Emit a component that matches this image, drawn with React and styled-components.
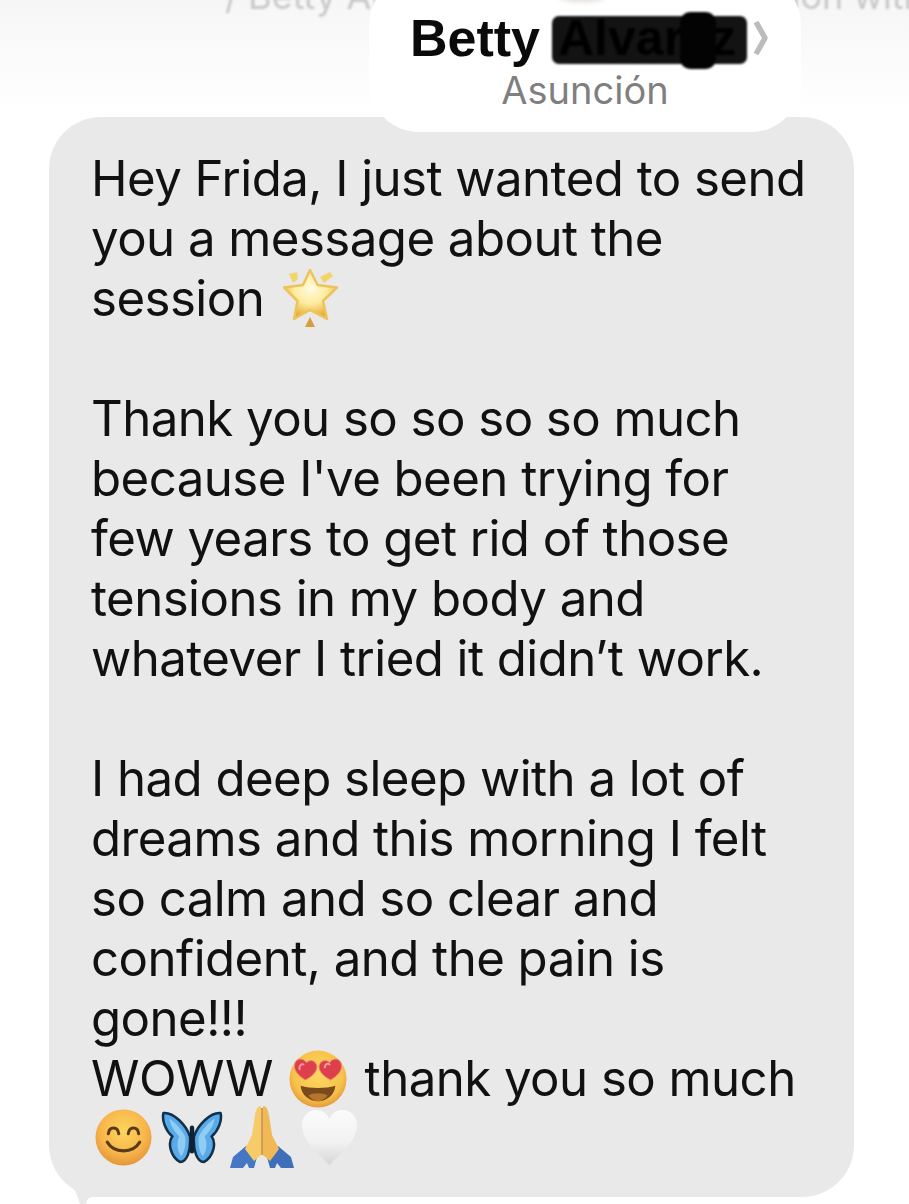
import React from 'react';
import styled, { createGlobalStyle } from 'styled-components';

const GlobalStyle = createGlobalStyle`
  html, body {
    margin: 0;
    padding: 0;
    background: #ffffff;
  }
`;

const Page = styled.div`
  position: relative;
  width: 909px;
  height: 1204px;
  overflow: hidden;
  background: linear-gradient(180deg, #f6f6f6 0, #fbfbfb 60px, #ffffff 110px);
  font-family: Inter, "Liberation Sans", sans-serif;
  color: #111111;
`;

/* the line of the previous screen, cut off by the top edge */
const GhostText = styled.div`
  position: absolute;
  top: -26px;
  left: ${(p) => p.$left}px;
  font-size: 36px;
  color: #c8c8c8;
  white-space: nowrap;
  filter: blur(1px);
`;

const HeaderRow = styled.div`
  position: relative;
  z-index: 2;
  display: flex;
  justify-content: flex-end;
  padding-right: 108px;
  margin-top: -25px;
  margin-bottom: -15px;
`;

const HeaderPill = styled.header`
  position: relative;
  box-sizing: border-box;
  width: 432px;
  height: 157px;
  padding-top: 38px;
  background: #ffffff;
  border-radius: 50px;
  display: flex;
  flex-direction: column;
  align-items: center;

  /* bottom of the avatar that scrolled away */
  &::before {
    content: '';
    position: absolute;
    top: 14px;
    left: 190px;
    width: 46px;
    height: 12px;
    border-radius: 50%;
    background: #d9d3c8;
    filter: blur(3px);
  }
`;

const NameRow = styled.div`
  display: flex;
  align-items: center;
  height: 50px;
  margin-left: 9px;
  font-family: "Liberation Sans", Arial, sans-serif;
  font-size: 52px;
  font-weight: 700;
  color: #0a0a0a;
`;

const Redacted = styled.span`
  position: relative;
  display: inline-block;
  box-sizing: border-box;
  margin: 3px 0 0 12px;
  padding-left: 6px;
  width: 195px;
  height: 48px;
  line-height: 44px;
  font-size: 50px;
  color: #000000;
  background: #131313;
  border-radius: 7px;
  filter: blur(1.3px);

  &::after {
    content: '';
    position: absolute;
    left: 128px;
    top: -4px;
    width: 36px;
    height: 57px;
    background: #030303;
    border-radius: 10px;
  }
`;

const Chevron = styled.svg`
  width: 16px;
  height: 38px;
  margin-left: 6px;
  flex: none;
`;

const Location = styled.div`
  margin-top: 4px;
  font-size: 38px;
  line-height: 46px;
  color: #7f7f7f;
`;

const Bubble = styled.main`
  position: relative;
  box-sizing: border-box;
  width: 805px;
  height: 1080px;
  margin-left: 49px;
  padding: 31px 0 0 42px;
  background: #e9e9e9;
  border-radius: 52px;

  /* tail in the bottom left corner */
  &::before {
    content: '';
    position: absolute;
    left: 0;
    bottom: -7px;
    width: 60px;
    height: 70px;
    background: #e9e9e9;
    clip-path: path("M0 0 L60 0 L60 63 L44 63 Q38 63 37 70 L31 70 Q28 58 18 44 Q8 32 3 16 Z");
  }
`;

const Paragraph = styled.p`
  position: relative;
  margin: 0 0 60px;
  font-size: 49.2px;
  line-height: 60px;
  letter-spacing: -0.55px;
  white-space: nowrap;
  color: #111111;
`;

const Emoji = styled.svg`
  display: inline-block;
  width: ${(p) => p.$w}px;
  height: ${(p) => p.$h}px;
  margin: -20px ${(p) => p.$gap ?? 0}px -${(p) => p.$sink}px ${(p) => p.$lead ?? 0}px;
  vertical-align: baseline;
`;

const GlowingStar = () => (
  <Emoji viewBox="0 0 56 60" $w={56} $h={60} $lead={6} $sink={12}>
    <defs>
      <radialGradient id="starFill" cx="0.5" cy="0.38" r="0.62">
        <stop offset="0" stopColor="#fffbe0" />
        <stop offset="0.5" stopColor="#fcec9f" />
        <stop offset="1" stopColor="#e6a52a" />
      </radialGradient>
    </defs>
    <path d="M27 2 L34.500 17 L54 19.500 L40 33 L44 51 L27 42 L11 51 L14.500 33 L1 19.500 L20 17 Z" fill="url(#starFill)" stroke="#ecc45a" strokeWidth="2.500" strokeLinejoin="round" />
    <path d="M6 6 L14 4 L15 11 L10 15 Z" fill="#f2d568" />
    <path d="M37 9 L47 4 L50 8 L41 15 Z" fill="#f2d568" />
    <path d="M27 49 L32 59 L22 59 Z" fill="#dd9c3c" />
  </Emoji>
);

const HeartEyes = () => (
  <Emoji viewBox="0 0 60 60" $w={58} $h={58} $lead={3} $gap={4} $sink={12}>
    <defs>
      <radialGradient id="faceA" cx="0.5" cy="0.42" r="0.6">
        <stop offset="0" stopColor="#fcd863" />
        <stop offset="0.72" stopColor="#f7c24b" />
        <stop offset="1" stopColor="#e3963a" />
      </radialGradient>
    </defs>
    <circle cx="30" cy="30" r="29.500" fill="url(#faceA)" />
    <path d="M17 31 C10 27 4 21 6 14 C8 8 15 8 18 13 C22 9 28 11 29 17 C29 23 23 28 17 31 Z" fill="#dd3f4c" stroke="#e9936a" strokeWidth="1" />
    <path d="M43 31 C37 28 31 23 31 17 C32 11 38 9 42 13 C45 8 52 8 54 14 C56 21 50 27 43 31 Z" fill="#dd3f4c" stroke="#e9936a" strokeWidth="1" />
    <path d="M11 20 C10 16 13 14 15 15" fill="none" stroke="#f79aa0" strokeWidth="2" strokeLinecap="round" />
    <path d="M37 18 C37 15 40 13 42 15" fill="none" stroke="#f79aa0" strokeWidth="2" strokeLinecap="round" />
    <path d="M12 37 C22 40 38 40 48 37 C47 47 39 53 30 53 C21 53 13 47 12 37 Z" fill="#7a4a1c" />
    <path d="M20 47 C25 44 35 44 40 47 C37 51 33 53 30 53 C27 53 23 51 20 47 Z" fill="#b5762c" />
  </Emoji>
);

const Smiling = () => (
  <Emoji viewBox="0 0 60 60" $w={57} $h={57} $lead={4} $gap={9} $sink={10}>
    <defs>
      <radialGradient id="faceB" cx="0.5" cy="0.38" r="0.62">
        <stop offset="0" stopColor="#fcd65c" />
        <stop offset="0.65" stopColor="#f8b64c" />
        <stop offset="1" stopColor="#e59638" />
      </radialGradient>
    </defs>
    <circle cx="30" cy="30" r="29.500" fill="url(#faceB)" />
    <path d="M14 26 C15 18 24 18 25 26" fill="none" stroke="#5b3a17" strokeWidth="3.200" strokeLinecap="round" />
    <path d="M35 26 C36 18 45 18 46 26" fill="none" stroke="#5b3a17" strokeWidth="3.200" strokeLinecap="round" />
    <path d="M13 35 C20 47 40 47 47 35" fill="none" stroke="#5b3a17" strokeWidth="3.400" strokeLinecap="round" />
  </Emoji>
);

const Butterfly = () => (
  <Emoji viewBox="0 0 62 54" $w={62} $h={53} $gap={7} $sink={8}>
    <path d="M29 26 C25 14 12 1 2 2 C0 9 4 20 11 26 C6 32 9 47 19 52 C26 52 30 40 29 26 Z" fill="#5aa9e8" stroke="#11304a" strokeWidth="2.600" strokeLinejoin="round" />
    <path d="M33 26 C37 14 50 1 60 2 C62 9 58 20 51 26 C56 32 53 47 43 52 C36 52 32 40 33 26 Z" fill="#5aa9e8" stroke="#11304a" strokeWidth="2.600" strokeLinejoin="round" />
    <path d="M24 26 C20 18 13 11 8 8 C9 15 13 21 18 26 C15 33 16 41 20 46 C24 41 25 33 24 26 Z" fill="#8fcdf5" />
    <path d="M38 26 C42 18 49 11 54 8 C53 15 49 21 44 26 C47 33 46 41 42 46 C38 41 37 33 38 26 Z" fill="#8fcdf5" />
    <path d="M31 17 L31 41" stroke="#0e2233" strokeWidth="4.500" strokeLinecap="round" />
  </Emoji>
);

const Praying = () => (
  <Emoji viewBox="0 0 64 64" $w={64} $h={64} $gap={7} $sink={13}>
    <path d="M0 63 L3 52 L16 41 L27 52 L24 63 L19 63 L17 58 L13 63 Z" fill="#4577c4" />
    <path d="M64 63 L61 52 L48 41 L37 52 L40 63 L45 63 L47 58 L51 63 Z" fill="#3f6fb8" />
    <path d="M31 1 C27 1 26 5 25 10 L22 30 L15 44 L24 56 L31 50 Z" fill="#f7cb68" />
    <path d="M33 1 C37 1 38 5 39 10 L42 30 L49 44 L40 56 L33 50 Z" fill="#f1b955" />
    <path d="M32 3 L32 50" stroke="#c98a3a" strokeWidth="1.600" />
  </Emoji>
);

const WhiteHeart = () => (
  <Emoji viewBox="0 0 57 57" $w={57} $h={57} $sink={10}>
    <defs>
      <linearGradient id="heartFill" x1="0" y1="0" x2="0" y2="1">
        <stop offset="0" stopColor="#fbfbfb" />
        <stop offset="0.6" stopColor="#f1f1f1" />
        <stop offset="1" stopColor="#d6d6d6" />
      </linearGradient>
    </defs>
    <path d="M28.500 56 C18 45 1 32 1 16 C1 7 8 1 15 1 C21 1 26 4 28.500 10 C31 4 36 1 42 1 C49 1 56 7 56 16 C56 32 39 45 28.500 56 Z" fill="url(#heartFill)" />
  </Emoji>
);

export default function App() {
  return (
    <>
      <GlobalStyle />
      <Page>
        <GhostText $left={225}>/ Betty Alva</GhostText>
        <GhostText $left={780}>tion with</GhostText>

        <HeaderRow>
          <HeaderPill>
            <NameRow>
              Betty
              <Redacted>Alvarez</Redacted>
              <Chevron viewBox="0 0 16 38">
                <path d="M3 3 L12 19 L3 35" fill="none" stroke="#bcbcbc" strokeWidth="5.500" strokeLinejoin="round" />
              </Chevron>
            </NameRow>
            <Location>Asunción</Location>
          </HeaderPill>
        </HeaderRow>

        <Bubble>
          <Paragraph>
            Hey Frida, I just wanted to send<br />
            you a message about the<br />
            session <GlowingStar />
          </Paragraph>
          <Paragraph>
            Thank you so so so so much<br />
            because I've been trying for<br />
            few years to get rid of those<br />
            tensions in my body and<br />
            whatever I tried it didn’t work.
          </Paragraph>
          <Paragraph>
            I had deep sleep with a lot of<br />
            dreams and this morning I felt<br />
            so calm and so clear and<br />
            confident, and the pain is<br />
            gone!!!<br />
            WOWW <HeartEyes /> thank you so much<br />
            <Smiling /><Butterfly /><Praying /><WhiteHeart />
          </Paragraph>
        </Bubble>
      </Page>
    </>
  );
}
